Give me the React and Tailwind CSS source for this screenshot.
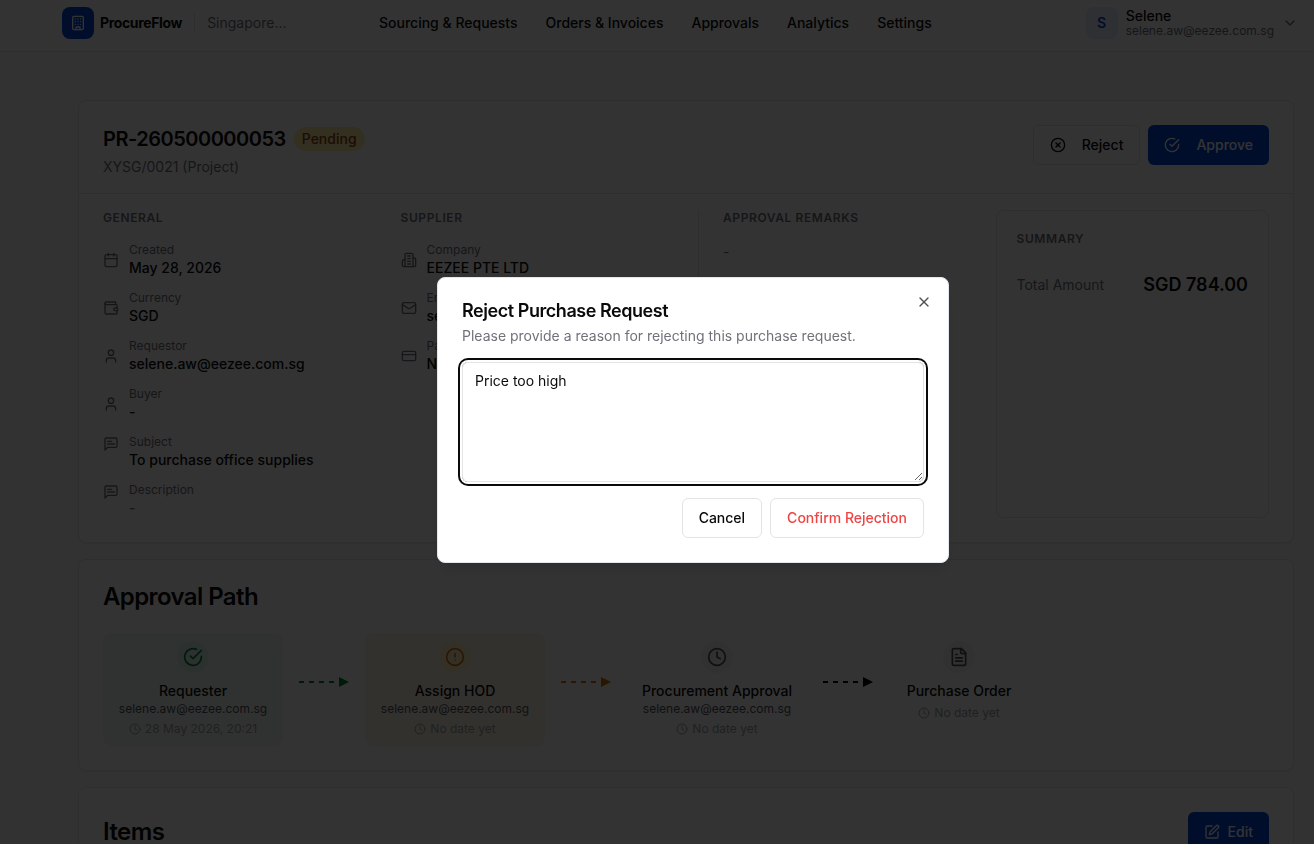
import {
  Building,
  Calendar,
  ChevronDown,
  CircleAlert,
  CircleX,
  Clock,
  CreditCard,
  Mail,
  SquarePen,
  User,
  Wallet,
  X,
} from "lucide-react";

const Glyph = ({ className, children }) => (
  <svg
    viewBox="0 0 24 24"
    fill="none"
    stroke="currentColor"
    strokeWidth="2"
    strokeLinecap="round"
    strokeLinejoin="round"
    className={className}
    aria-hidden="true"
  >
    {children}
  </svg>
);

const CheckCircle = (props) => (
  <Glyph {...props}>
    <path d="M22 11.08V12a10 10 0 1 1-5.93-9.14" />
    <path d="m9 11 3 3L22 4" />
  </Glyph>
);

const Company = (props) => (
  <Glyph {...props}>
    <path d="M6 22V4a2 2 0 0 1 2-2h8a2 2 0 0 1 2 2v18Z" />
    <path d="M6 12H4a2 2 0 0 0-2 2v6a2 2 0 0 0 2 2h2" />
    <path d="M18 9h2a2 2 0 0 1 2 2v9a2 2 0 0 1-2 2h-2" />
    <path d="M10 6h4M10 10h4M10 14h4M10 18h4" />
  </Glyph>
);

const Message = (props) => (
  <Glyph {...props}>
    <path d="M21 15a2 2 0 0 1-2 2H7l-4 4V5a2 2 0 0 1 2-2h14a2 2 0 0 1 2 2z" />
    <path d="M13 8H7M17 12H7" />
  </Glyph>
);

const FileText = (props) => (
  <Glyph {...props}>
    <path d="M15 2H6a2 2 0 0 0-2 2v16a2 2 0 0 0 2 2h12a2 2 0 0 0 2-2V7Z" />
    <path d="M14 2v4a2 2 0 0 0 2 2h4" />
    <path d="M10 9H8M16 13H8M16 17H8" />
  </Glyph>
);

const navItems = ["Sourcing & Requests", "Orders & Invoices", "Approvals", "Analytics", "Settings"];

const generalFields = [
  { icon: Calendar, label: "Created", value: "May 28, 2026" },
  { icon: Wallet, label: "Currency", value: "SGD" },
  { icon: User, label: "Requestor", value: "selene.aw@eezee.com.sg" },
  { icon: User, label: "Buyer", value: "-" },
  { icon: Message, label: "Subject", value: "To purchase office supplies", top: true },
  { icon: Message, label: "Description", value: "-", top: true, muted: true },
];

const supplierFields = [
  { icon: Company, label: "Company", value: "EEZEE PTE LTD" },
  { icon: Mail, label: "Email", value: "selene.aw@eezee.com.sg" },
  { icon: CreditCard, label: "Payment Terms", value: "NET 30" },
];

const steps = [
  {
    name: "Requester",
    email: "selene.aw@eezee.com.sg",
    date: "28 May 2026, 20:21",
    icon: CheckCircle,
    box: "w-45 bg-[#f1fbf2]",
    badge: "bg-[#dcf5e8] text-green-700",
    arrow: "text-green-700",
  },
  {
    name: "Assign HOD",
    email: "selene.aw@eezee.com.sg",
    date: "No date yet",
    icon: CircleAlert,
    box: "w-45 bg-[#fff6e5]",
    badge: "bg-[#feefc3] text-amber-600",
    arrow: "text-amber-600",
  },
  {
    name: "Procurement Approval",
    email: "selene.aw@eezee.com.sg",
    date: "No date yet",
    icon: Clock,
    box: "w-45",
    badge: "bg-zinc-100 text-zinc-600",
    arrow: "text-black",
  },
  {
    name: "Purchase Order",
    date: "No date yet",
    icon: FileText,
    box: "w-35",
    badge: "bg-zinc-100 text-zinc-600",
  },
];

const Header = () => (
  <header className="flex items-center h-[52px] pt-[7px] pb-3 pl-[62px] pr-4 bg-white border-b border-zinc-200">
    <div className="flex items-center w-[317px] shrink-0">
      <div className="w-8 h-8 rounded-lg bg-[#0048d8] text-white flex items-center justify-center">
        <Building className="w-4 h-4" />
      </div>
      <span className="ml-1.5 text-sm font-bold tracking-tight">ProcureFlow</span>
      <span className="mx-3 w-px h-5 bg-zinc-200" />
      <span className="text-sm text-zinc-500">Singapore...</span>
    </div>
    <nav className="flex gap-7 text-sm font-medium">
      {navItems.map((item) => (
        <a key={item} href="#" className="whitespace-nowrap">
          {item}
        </a>
      ))}
    </nav>
    <button className="ml-auto flex items-center gap-2 text-left">
      <span className="w-8 h-8 rounded-lg bg-[#e9eefc] text-[#0048d8] text-sm font-semibold flex items-center justify-center">
        S
      </span>
      <span>
        <span className="block text-sm leading-4 font-medium">Selene</span>
        <span className="block text-xs leading-[14px] text-zinc-500">selene.aw@eezee.com.sg</span>
      </span>
      <ChevronDown className="w-4 h-4 text-zinc-500" />
    </button>
  </header>
);

const SectionTitle = ({ children }) => (
  <h3 className="text-xs font-semibold tracking-wider text-zinc-500 uppercase">{children}</h3>
);

const Field = ({ icon: Icon, label, value, top, muted }) => (
  <div className={`flex gap-2.5 ${top ? "items-start" : "items-center"}`}>
    <Icon className={`w-4 h-4 text-zinc-500 ${top ? "mt-0.5" : ""}`} />
    <div>
      <div className="text-xs text-zinc-500">{label}</div>
      <div className={`text-sm font-medium ${muted ? "text-zinc-500" : ""}`}>{value}</div>
    </div>
  </div>
);

const Arrow = ({ className }) => (
  <svg width="50" height="10" viewBox="0 0 50 10" className={`shrink-0 mt-11 ${className}`} aria-hidden="true">
    <path d="M0 5H40" stroke="currentColor" strokeWidth="2" strokeDasharray="5 5" />
    <path d="M40 0L50 5L40 10Z" fill="currentColor" />
  </svg>
);

const Step = ({ step }) => {
  const Icon = step.icon;
  return (
    <div className={`shrink-0 self-stretch min-h-[113px] rounded-lg p-2 flex flex-col items-center ${step.box}`}>
      <div className={`w-8 h-8 rounded-full flex items-center justify-center ${step.badge}`}>
        <Icon className="w-5 h-5" />
      </div>
      <div className="mt-2 text-sm font-medium whitespace-nowrap">{step.name}</div>
      {step.email && <div className="text-xs text-zinc-600">{step.email}</div>}
      <div className="mt-1 flex items-center gap-1 text-xs text-zinc-400">
        <Clock className="w-3 h-3" />
        {step.date}
      </div>
    </div>
  );
};

const RequestCard = () => (
  <section className="bg-white border border-zinc-200 rounded-lg shadow-xs">
    <div className="flex items-start justify-between p-6 pb-4 border-b border-zinc-200">
      <div>
        <div className="flex items-center gap-2">
          <h1 className="text-xl font-semibold tracking-tight">PR-260500000053</h1>
          <span className="rounded-full bg-[#feeca6] text-[#92400e] text-sm font-medium px-2 py-0.5">Pending</span>
        </div>
        <p className="mt-1 text-sm text-zinc-500">XYSG/0021 (Project)</p>
      </div>
      <div className="flex gap-2 text-sm font-medium">
        <button className="h-10 px-4 flex items-center gap-4 rounded-md border border-zinc-200">
          <CircleX className="w-4 h-4" />
          Reject
        </button>
        <button className="h-10 px-4 flex items-center gap-4 rounded-md bg-[#0048d8] text-white">
          <CheckCircle className="w-4 h-4" />
          Approve
        </button>
      </div>
    </div>
    <div className="grid grid-cols-4 gap-6 px-6 pt-4 pb-6">
      <div>
        <SectionTitle>General</SectionTitle>
        <div className="mt-4 space-y-3">
          {generalFields.map((field) => (
            <Field key={field.label} {...field} />
          ))}
        </div>
      </div>
      <div>
        <SectionTitle>Supplier</SectionTitle>
        <div className="mt-4 space-y-3">
          {supplierFields.map((field) => (
            <Field key={field.label} {...field} />
          ))}
        </div>
      </div>
      <div className="border-l border-zinc-200 pl-6">
        <SectionTitle>Approval Remarks</SectionTitle>
        <p className="mt-4 text-sm text-zinc-500">-</p>
      </div>
      <div className="rounded-lg border border-zinc-200 p-5">
        <SectionTitle>Summary</SectionTitle>
        <div className="mt-6 flex items-center justify-between">
          <span className="text-sm text-zinc-500">Total Amount</span>
          <span className="text-lg font-semibold">SGD 784.00</span>
        </div>
      </div>
    </div>
  </section>
);

const ApprovalPath = () => (
  <section className="bg-white border border-zinc-200 rounded-lg shadow-xs p-6">
    <h2 className="text-2xl leading-[26px] font-semibold tracking-tight">Approval Path</h2>
    <div className="mt-[23px] flex items-start gap-4">
      {steps.map((step) => [
        <Step key={step.name} step={step} />,
        step.arrow && <Arrow key={`${step.name}-arrow`} className={step.arrow} />,
      ])}
    </div>
  </section>
);

const ItemsCard = () => (
  <section className="bg-white border border-zinc-200 rounded-lg shadow-xs p-6 flex items-center justify-between">
    <h2 className="text-2xl font-semibold tracking-tight">Items</h2>
    <button className="h-10 px-4 flex items-center gap-2 rounded-md bg-[#0048d8] text-white text-sm font-medium">
      <SquarePen className="w-4 h-4" />
      Edit
    </button>
  </section>
);

const RejectDialog = () => (
  <div className="fixed inset-0 bg-black/80 flex items-center justify-center pl-[72px] pb-1">
    <div
      role="dialog"
      aria-labelledby="reject-title"
      className="relative w-full max-w-lg bg-white border border-slate-200 rounded-lg shadow-lg p-6 flex flex-col gap-4"
    >
      <div className="flex flex-col gap-1.5">
        <h2 id="reject-title" className="text-lg leading-[18px] font-semibold tracking-tight">
          Reject Purchase Request
        </h2>
        <label htmlFor="reason" className="text-sm text-zinc-500">
          Please provide a reason for rejecting this purchase request.
        </label>
      </div>
      <textarea
        id="reason"
        defaultValue="Price too high"
        className="block w-full h-30 rounded-md border border-zinc-200 px-3 py-2 text-sm outline-none ring-2 ring-neutral-950 ring-offset-2"
      />
      <div className="flex justify-end gap-2 text-sm font-medium">
        <button className="h-10 px-4 rounded-md border border-zinc-200">Cancel</button>
        <button className="h-10 px-4 rounded-md border border-zinc-200 text-[#ef4444]">Confirm Rejection</button>
      </div>
      <button aria-label="Close" className="absolute right-4 top-4 text-neutral-600">
        <X className="w-4 h-4" />
      </button>
    </div>
  </div>
);

export default function App() {
  return (
    <div className="h-screen overflow-hidden bg-neutral-50 text-neutral-950 font-['Inter',sans-serif]">
      <Header />
      <main className="pt-12 pl-[78px] pr-5 space-y-4">
        <RequestCard />
        <ApprovalPath />
        <ItemsCard />
      </main>
      <RejectDialog />
    </div>
  );
}
